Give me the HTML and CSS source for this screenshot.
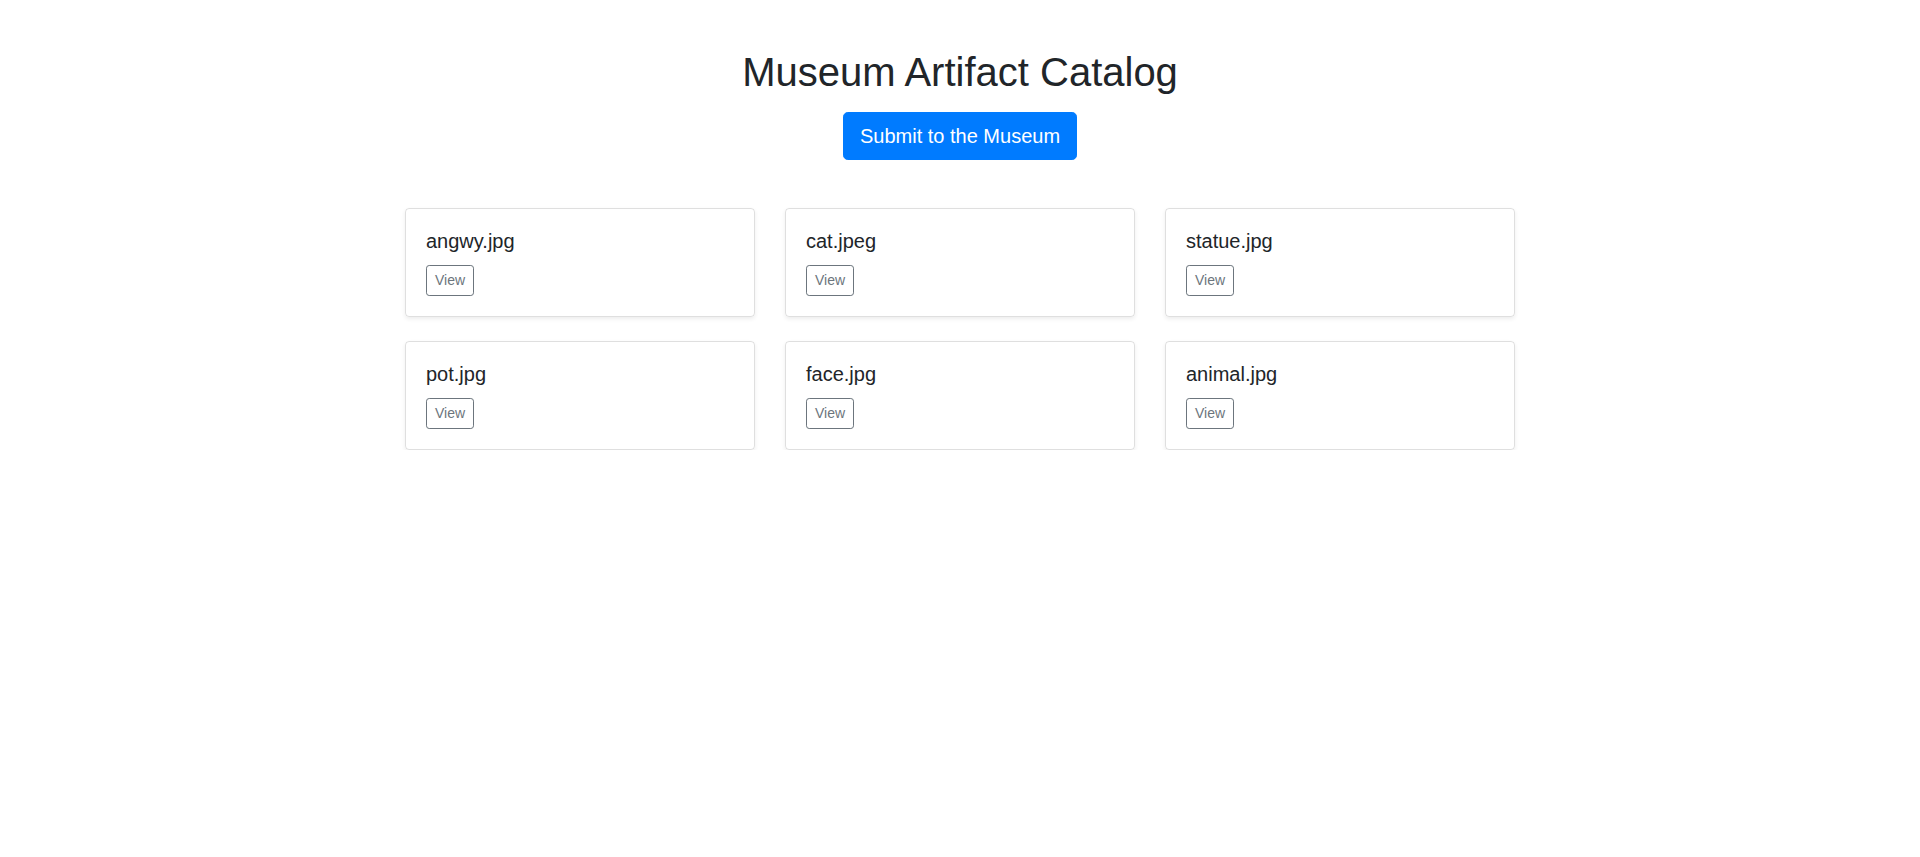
FILE: index.html
```html
<!DOCTYPE html>
<html lang="en">
<head>
<meta charset="utf-8">
<title>Museum Artifact Catalog</title>
<link rel="stylesheet" href="styles.css">
</head>
<body>
<div class="container">
  <header class="header">
    <h1 class="title">Museum Artifact Catalog</h1>
    <a class="btn-primary" href="#">Submit to the Museum</a>
  </header>
  <div class="grid">
    <div class="card"><h5 class="card-title">angwy.jpg</h5><a class="btn-view" href="#">View</a></div>
    <div class="card"><h5 class="card-title">cat.jpeg</h5><a class="btn-view" href="#">View</a></div>
    <div class="card"><h5 class="card-title">statue.jpg</h5><a class="btn-view" href="#">View</a></div>
    <div class="card"><h5 class="card-title">pot.jpg</h5><a class="btn-view" href="#">View</a></div>
    <div class="card"><h5 class="card-title">face.jpg</h5><a class="btn-view" href="#">View</a></div>
    <div class="card"><h5 class="card-title">animal.jpg</h5><a class="btn-view" href="#">View</a></div>
  </div>
</div>
</body>
</html>
```

FILE: styles.css
```css
* { box-sizing: border-box; }
html, body { margin: 0; padding: 0; }
body {
  font-family: "Liberation Sans", Arial, sans-serif;
  font-size: 16px;
  line-height: 1.5;
  color: #212529;
  background: #fff;
}
.container {
  max-width: 1140px;
  margin: 0 auto;
  padding: 48px 15px 0;
}
.header {
  display: flex;
  flex-direction: column;
  align-items: center;
  margin-bottom: 48px;
}
.title {
  margin: 0 0 16px;
  font-size: 40px;
  font-weight: 500;
  line-height: 48px;
}
.btn-primary {
  display: inline-block;
  padding: 8px 16px;
  font-size: 20px;
  line-height: 30px;
  color: #fff;
  background: #007bff;
  border: 1px solid #007bff;
  border-radius: 4.8px;
  text-decoration: none;
}
.grid {
  display: grid;
  grid-template-columns: repeat(3, 350px);
  column-gap: 30px;
  row-gap: 24px;
}
.card {
  border: 1px solid rgba(0,0,0,.125);
  border-radius: 4px;
  box-shadow: 0 .125rem .25rem rgba(0,0,0,.075);
  padding: 20px;
  display: flex;
  flex-direction: column;
  align-items: flex-start;
}
.card-title {
  margin: 0 0 12px;
  font-size: 20px;
  font-weight: 500;
  line-height: 24px;
}
.btn-view {
  display: inline-block;
  padding: 4px 8px;
  font-size: 14px;
  line-height: 21px;
  color: #6c757d;
  border: 1px solid #6c757d;
  border-radius: 3.2px;
  text-decoration: none;
}
```
